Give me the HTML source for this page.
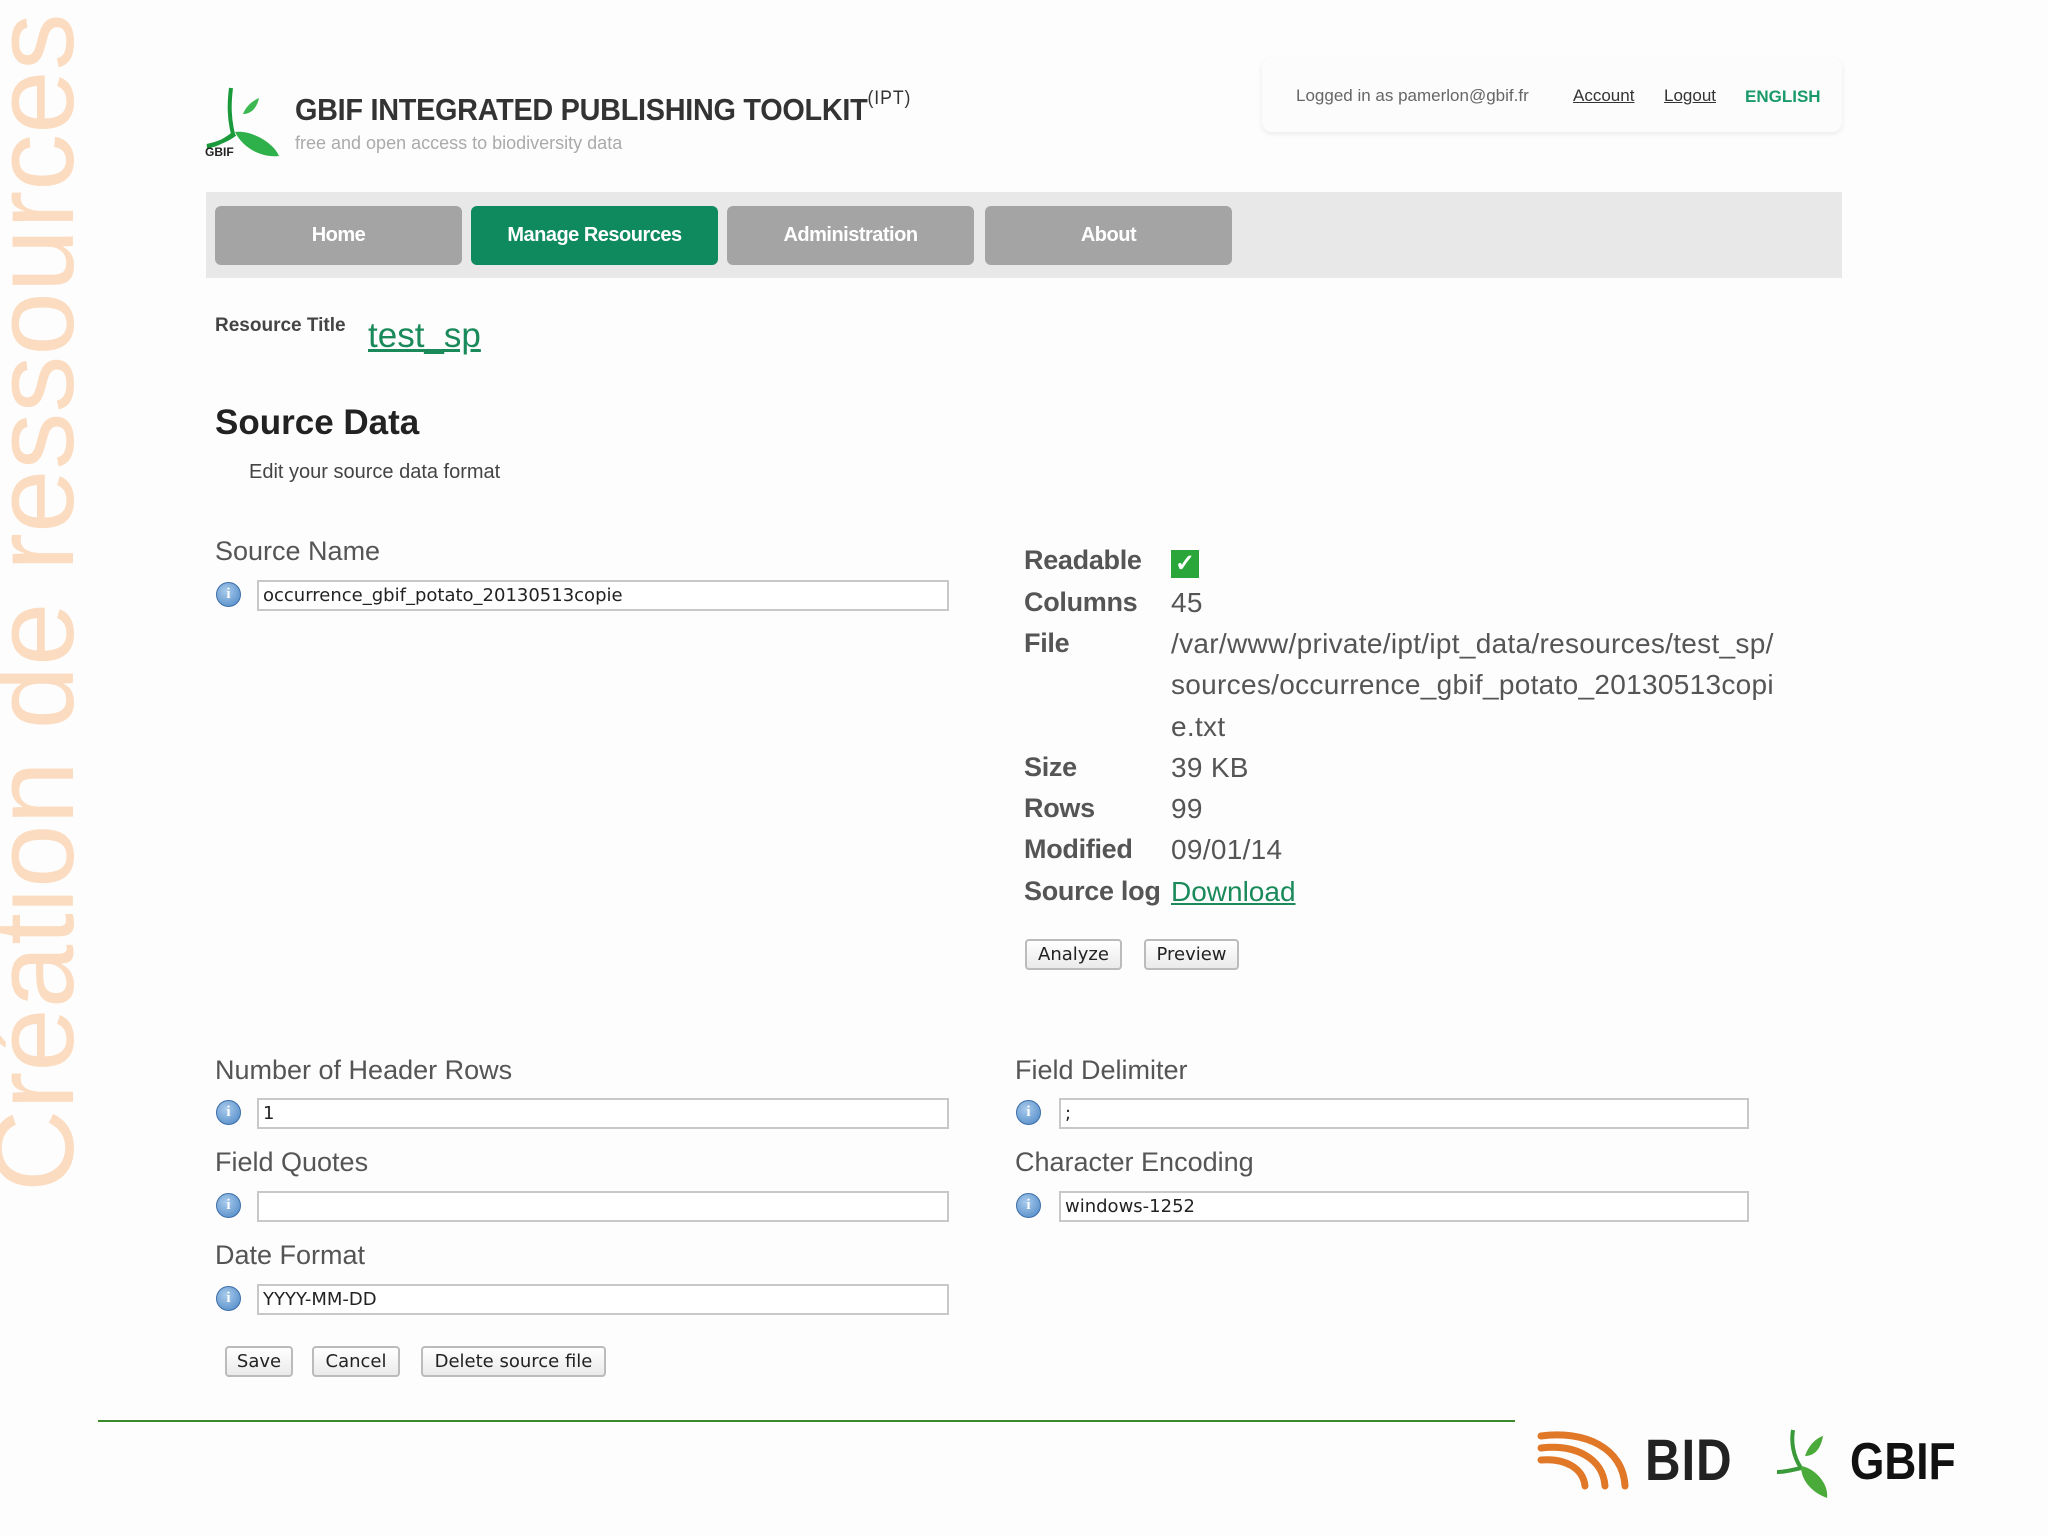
<!DOCTYPE html>
<html><head><meta charset="utf-8"><style>
*{margin:0;padding:0;box-sizing:border-box}
body{width:2048px;height:1536px;background:#fdfdfd;position:relative;overflow:hidden;font-family:"Liberation Sans",sans-serif;color:#555}
.a{position:absolute;white-space:nowrap}
.vt{position:absolute;left:-22px;top:1192px;transform-origin:0 0;transform:rotate(-90deg);font-size:114px;color:#fbdcc0;line-height:1;}
.nav{position:absolute;left:206px;top:192px;width:1636px;height:86px;background:#e8e8e8}
.btn{position:absolute;top:14px;width:247px;height:59px;border-radius:6px;background:#a4a4a4;color:#fff;font-weight:bold;font-size:20px;text-align:center;line-height:59px;letter-spacing:-0.5px}
.lbl{font-size:27px;color:#555}
.inp{position:absolute;height:31px;border:2px solid #c8c8c8;background:#fff;font-family:"DejaVu Sans",sans-serif;font-size:18px;color:#222;padding-left:4px;line-height:27px}
.ic{position:absolute;width:25px;height:25px;border-radius:50%;background:radial-gradient(circle at 40% 35%,#a9cbec,#4a85c4);border:1px solid #3c6ea8;color:#fff;font:bold 15px "Liberation Serif",serif;text-align:center;line-height:23px}
.k{position:absolute;left:1024px;font-size:27px;font-weight:bold;color:#555;letter-spacing:-0.3px}
.v{position:absolute;left:1171px;font-size:28px;color:#555;letter-spacing:0.3px}
.b{position:absolute;height:31px;border:2px solid #bbb;border-radius:4px;background:linear-gradient(#fff,#eaeaea);font-family:"DejaVu Sans",sans-serif;font-size:18px;color:#222;text-align:center;line-height:27px}
</style></head><body>
<div class="vt">Création de ressources</div>

<svg class="a" style="left:203px;top:84px" width="80" height="76" viewBox="0 0 80 76">
<path d="M28 4 C26 20 26 34 30 50 C20 58 10 62 4 62 C14 60 24 56 32 50" stroke="#1a9a3a" stroke-width="4" fill="none"/>
<path d="M32 48 C48 46 70 58 76 72 C58 74 40 64 32 48Z" fill="#2eb04a"/>
<path d="M40 30 C44 20 52 16 56 14 C54 24 48 30 40 30Z" fill="#3cb850"/>
<text x="2" y="72" font-family="Liberation Sans" font-weight="bold" font-size="12" fill="#222">GBIF</text>
</svg>
<div class="a" style="left:295px;top:92px;font-size:31px;font-weight:bold;color:#333;letter-spacing:-0.3px;transform:scaleX(0.93);transform-origin:0 0">GBIF INTEGRATED PUBLISHING TOOLKIT<span style="font-size:19px;font-weight:normal;vertical-align:top;position:relative;top:-4px;letter-spacing:1px">(IPT)</span></div>
<div class="a" style="left:295px;top:133px;font-size:18px;color:#aaa">free and open access to biodiversity data</div>

<div class="a" style="left:1262px;top:58px;width:580px;height:74px;border-radius:10px;background:#fcfcfc;box-shadow:0 2px 6px rgba(0,0,0,0.08)"></div>
<div class="a" style="left:1296px;top:86px;font-size:17px;color:#666">Logged in as pamerlon@gbif.fr</div>
<div class="a" style="left:1573px;top:86px;font-size:17px;color:#333;text-decoration:underline">Account</div>
<div class="a" style="left:1664px;top:86px;font-size:17px;color:#333;text-decoration:underline">Logout</div>
<div class="a" style="left:1745px;top:87px;font-size:17px;color:#1a9a6a;font-weight:bold">ENGLISH</div>

<div class="nav">
<div class="btn" style="left:9px">Home</div>
<div class="btn" style="left:265px;background:#0f8a5f">Manage Resources</div>
<div class="btn" style="left:521px">Administration</div>
<div class="btn" style="left:779px">About</div>
</div>

<div class="a" style="left:215px;top:315px;font-size:19px;font-weight:bold;color:#444">Resource Title</div>
<div class="a" style="left:368px;top:316px;font-size:35px;color:#1a8a5a;text-decoration:underline">test_sp</div>
<div class="a" style="left:215px;top:403px;font-size:35px;font-weight:bold;color:#222">Source Data</div>
<div class="a" style="left:249px;top:461px;font-size:20px;color:#444">Edit your source data format</div>

<div class="a lbl" style="left:215px;top:536px">Source Name</div>
<div class="ic" style="left:216px;top:582px">i</div>
<div class="inp" style="left:257px;top:580px;width:692px">occurrence_gbif_potato_20130513copie</div>

<div class="k" style="top:545px">Readable</div>
<div class="a" style="left:1171px;top:550px;width:28px;height:28px;background:#2aa63a;color:#fff;font-size:24px;line-height:28px;text-align:center;font-weight:bold">✓</div>
<div class="k" style="top:587px">Columns</div><div class="v" style="top:587px">45</div>
<div class="k" style="top:628px">File</div><div class="v" style="top:628px">/var/www/private/ipt/ipt_data/resources/test_sp/</div>
<div class="v" style="top:669px">sources/occurrence_gbif_potato_20130513copi</div>
<div class="v" style="top:711px">e.txt</div>
<div class="k" style="top:752px">Size</div><div class="v" style="top:752px">39 KB</div>
<div class="k" style="top:793px">Rows</div><div class="v" style="top:793px">99</div>
<div class="k" style="top:834px">Modified</div><div class="v" style="top:834px">09/01/14</div>
<div class="k" style="top:876px">Source log</div><div class="v" style="top:876px;color:#1a8a5a;text-decoration:underline;letter-spacing:0">Download</div>
<div class="b" style="left:1025px;top:939px;width:97px">Analyze</div>
<div class="b" style="left:1144px;top:939px;width:95px">Preview</div>

<div class="a lbl" style="left:215px;top:1055px">Number of Header Rows</div>
<div class="ic" style="left:216px;top:1100px">i</div>
<div class="inp" style="left:257px;top:1098px;width:692px">1</div>
<div class="a lbl" style="left:1015px;top:1055px">Field Delimiter</div>
<div class="ic" style="left:1016px;top:1100px">i</div>
<div class="inp" style="left:1059px;top:1098px;width:690px">;</div>

<div class="a lbl" style="left:215px;top:1147px">Field Quotes</div>
<div class="ic" style="left:216px;top:1193px">i</div>
<div class="inp" style="left:257px;top:1191px;width:692px"></div>
<div class="a lbl" style="left:1015px;top:1147px">Character Encoding</div>
<div class="ic" style="left:1016px;top:1193px">i</div>
<div class="inp" style="left:1059px;top:1191px;width:690px">windows-1252</div>

<div class="a lbl" style="left:215px;top:1240px">Date Format</div>
<div class="ic" style="left:216px;top:1286px">i</div>
<div class="inp" style="left:257px;top:1284px;width:692px">YYYY-MM-DD</div>

<div class="b" style="left:225px;top:1346px;width:68px">Save</div>
<div class="b" style="left:312px;top:1346px;width:88px">Cancel</div>
<div class="b" style="left:421px;top:1346px;width:185px">Delete source file</div>

<div class="a" style="left:98px;top:1420px;width:1417px;height:2px;background:#3a8a2a"></div>

<svg class="a" style="left:1535px;top:1428px" width="100" height="64" viewBox="0 0 100 64">
<g fill="none" stroke="#e07828" stroke-width="7" stroke-linecap="round">
<path d="M6 8 C50 2 88 20 90 58"/><path d="M6 20 C40 16 68 30 70 58"/><path d="M6 32 C30 30 48 40 50 58"/></g></svg>
<div class="a" style="left:1645px;top:1427px;font-size:58px;font-weight:bold;color:#222;letter-spacing:1px;transform:scaleX(0.85);transform-origin:0 0">BID</div>
<svg class="a" style="left:1775px;top:1428px" width="70" height="72" viewBox="0 0 70 72">
<path d="M18 2 C16 14 18 28 26 40 C18 42 10 44 2 44" stroke="#3a9a3a" stroke-width="4" fill="none"/>
<path d="M26 38 C40 40 54 56 52 70 C36 64 26 52 26 38Z" fill="#4aaa3a"/>
<path d="M30 28 C34 16 42 10 48 8 C46 20 40 28 30 28Z" fill="#4aaa3a"/></svg>
<div class="a" style="left:1850px;top:1432px;font-size:52px;font-weight:bold;color:#111;transform:scaleX(0.85);transform-origin:0 0">GBIF</div>
</body></html>
